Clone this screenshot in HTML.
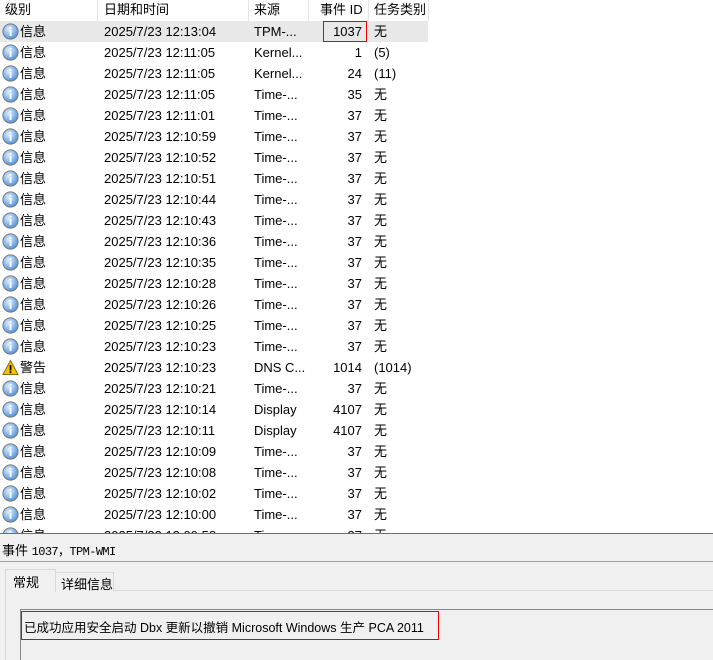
<!DOCTYPE html>
<html><head><meta charset="utf-8"><style>
body{margin:0;width:713px;height:659px;overflow:hidden;background:#fff;font-family:"Liberation Sans","Noto Sans CJK SC",sans-serif;font-size:13px;color:#000;position:relative}
.a{position:absolute;white-space:nowrap}
.sep{position:absolute;top:0;width:1px;height:21px;background:#e5e5e5}
.row{position:absolute;left:0;width:713px;height:21px;line-height:21px}
.row span{position:absolute;top:0}
</style></head><body>
<div class="a" style="left:0;top:0;width:713px;height:21px;line-height:20px">
<span class="a" style="left:5px">级别</span>
<span class="a" style="left:104px">日期和时间</span>
<span class="a" style="left:254px">来源</span>
<span class="a" style="left:320px">事件 ID</span>
<span class="a" style="left:374px">任务类别</span>
</div>
<div class="sep" style="left:97px"></div><div class="sep" style="left:248px"></div><div class="sep" style="left:308px"></div><div class="sep" style="left:368px"></div><div class="sep" style="left:428px"></div>
<div id="rows"></div>
<div class="a" style="left:0;top:533px;width:713px;height:126px;background:#f0f0f0;border-top:1px solid #6e6e6e"></div>
<div class="a" style="left:2px;top:540px;font-size:13px">事件 <span style="font-family:'Liberation Mono',monospace;font-size:12px;letter-spacing:-0.6px">1037，TPM-WMI</span></div>
<div class="a" style="left:0;top:561px;width:713px;height:1px;background:#a0a0a0"></div>
<div class="a" style="left:5px;top:590px;width:708px;height:69px;border-top:1px solid #d9d9d9;border-left:1px solid #d9d9d9;background:#f0f0f0"></div>
<div class="a" style="left:5px;top:569px;width:49px;height:22px;background:#f0f0f0;border:1px solid #d9d9d9;border-bottom:none"></div>
<div class="a" style="left:13px;top:572px">常规</div>
<div class="a" style="left:55px;top:572px;width:57px;height:18px;background:#f0f0f0;border:1px solid #d9d9d9;border-bottom:none"></div>
<div class="a" style="left:61px;top:574px">详细信息</div>
<div class="a" style="left:20px;top:609px;width:693px;height:50px;border-top:1px solid #888;border-left:1px solid #888"></div>
<div class="a" style="left:21px;top:611px;width:416px;height:27px;border:1px solid #e00"></div>
<div class="a" style="left:24px;top:617px;font-size:12.5px">已成功应用安全启动 Dbx 更新以撤销 Microsoft Windows 生产 PCA 2011</div>
<div class="a" style="left:323px;top:21px;width:44px;height:21px;border:1px solid #e00;box-sizing:border-box;z-index:3"></div>
<script>
var d=[["12:13:04","TPM-...","1037","无"],["12:11:05","Kernel...","1","(5)"],["12:11:05","Kernel...","24","(11)"],["12:11:05","Time-...","35","无"],["12:11:01","Time-...","37","无"],["12:10:59","Time-...","37","无"],["12:10:52","Time-...","37","无"],["12:10:51","Time-...","37","无"],["12:10:44","Time-...","37","无"],["12:10:43","Time-...","37","无"],["12:10:36","Time-...","37","无"],["12:10:35","Time-...","37","无"],["12:10:28","Time-...","37","无"],["12:10:26","Time-...","37","无"],["12:10:25","Time-...","37","无"],["12:10:23","Time-...","37","无"],["12:10:23","DNS C...","1014","(1014)",1],["12:10:21","Time-...","37","无"],["12:10:14","Display","4107","无"],["12:10:11","Display","4107","无"],["12:10:09","Time-...","37","无"],["12:10:08","Time-...","37","无"],["12:10:02","Time-...","37","无"],["12:10:00","Time-...","37","无"],["12:09:58","Time-...","37","无"]];
var info='<svg width="17" height="17" viewBox="0 0 17 17" style="position:absolute;left:2px;top:2px"><defs><radialGradient id="g" cx="0.4" cy="0.35" r="0.75"><stop offset="0" stop-color="#e0f0ff"/><stop offset="1" stop-color="#3f86dc"/></radialGradient></defs><circle cx="8.5" cy="8.5" r="7.6" fill="url(#g)" stroke="#7a7a7a"/><rect x="7.6" y="7" width="1.9" height="6" fill="#fff"/><circle cx="8.55" cy="4.8" r="1.1" fill="#fff"/></svg>';
var warn='<svg width="17" height="17" viewBox="0 0 17 17" style="position:absolute;left:2px;top:2px"><path d="M8.5 1.5L16 15.5H1z" fill="#f5c400" stroke="#8a6d00"/><rect x="7.6" y="6" width="1.8" height="5.5" fill="#000"/><rect x="7.6" y="12.3" width="1.8" height="1.8" fill="#000"/></svg>';
var h='';
d.forEach(function(r,i){var y=21+i*21;
h+='<div class="row" style="top:'+y+'px;'+(i==0?'background:linear-gradient(90deg,#e8e8e8 0 428px,#fff 428px)':'')+'">'+(r[4]?warn:info)+'<span style="left:20px">'+(r[4]?'警告':'信息')+'</span><span style="left:104px">2025/7/23 '+r[0]+'</span><span style="left:254px">'+r[1]+'</span><span style="right:351px">'+r[2]+'</span><span style="left:374px">'+r[3]+'</span></div>';});
document.getElementById('rows').innerHTML=h;
</script>
</body></html>
